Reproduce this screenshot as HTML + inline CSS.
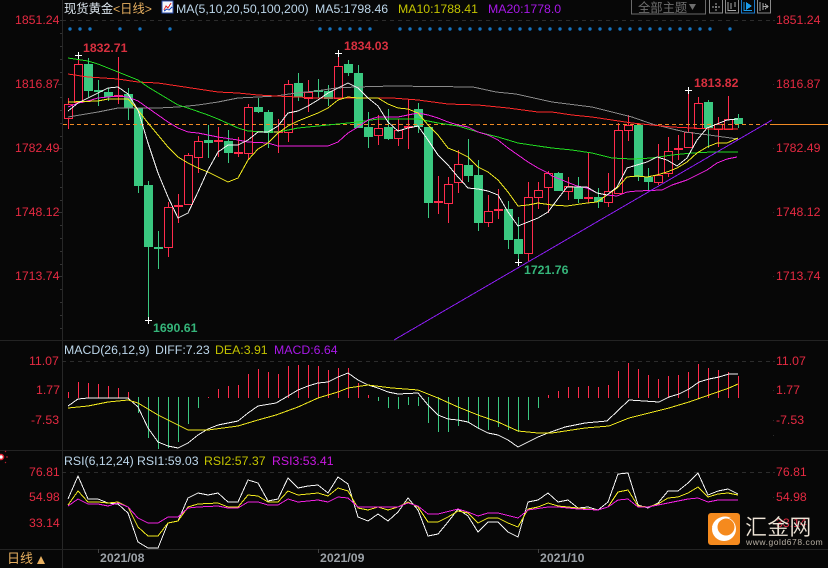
<!DOCTYPE html>
<html><head><meta charset="utf-8"><style>
html,body{margin:0;padding:0;background:#070707;width:828px;height:568px;overflow:hidden}
svg{display:block}
text{font-family:"Liberation Sans","Noto Sans CJK SC",sans-serif;font-size:12.3px;white-space:pre}
.r{fill:#e62a42}.b{font-weight:bold}
.l{fill:none;stroke-width:1;shape-rendering:crispEdges}
</style></head><body>
<svg width="828" height="568" viewBox="0 0 828 568" xmlns="http://www.w3.org/2000/svg">
<rect width="828" height="568" fill="#070707"/>
<!-- grid -->
<g shape-rendering="crispEdges" fill="none">
<path d="M62.5 0V568" stroke="#272727"/>
<path d="M0 340.5H828M0 450.5H828M0 549.5H828" stroke="#232323"/>
<path d="M62 20.5H775M62 361.5H775M62 472.5H775" stroke="#2c2c2c" stroke-dasharray="4 4"/>
<path d="M60 20.5h2M60 33.5h2M60 46.5h2M60 59.5h2M60 72.5h2M58 84.5h4M60 97.5h2M60 110.5h2M60 123.5h2M60 136.5h2M58 148.5h4M60 161.5h2M60 174.5h2M60 187.5h2M60 200.5h2M58 212.5h4M60 225.5h2M60 238.5h2M60 251.5h2M60 264.5h2M58 276.5h4M60 289.5h2M60 302.5h2M60 315.5h2M60 328.5h2" stroke="#333"/>
<path d="M773 20.5h1M773 84.5h1M773 148.5h1M773 212.5h1M773 276.5h1M773 361.5h1M773 390.5h1M773 420.5h1M773 435.5h1M773 472.5h1M773 497.5h1M773 523.5h1" stroke="#2c2c2c"/>
<path d="M98.5 549v4M318.5 549v4M538.5 549v4" stroke="#444"/>
</g>
<!-- blue dots -->
<g fill="#1673c0">
<circle cx="70" cy="29" r="1.7"/><circle cx="80" cy="29" r="1.7"/><circle cx="90" cy="29" r="1.7"/><circle cx="120" cy="29" r="1.7"/><circle cx="140" cy="29" r="1.7"/><circle cx="170" cy="29" r="1.7"/>
<circle cx="320" cy="29" r="1.7"/><circle cx="330" cy="29" r="1.7"/><circle cx="340" cy="29" r="1.7"/><circle cx="350" cy="29" r="1.7"/><circle cx="360" cy="29" r="1.7"/><circle cx="370" cy="29" r="1.7"/>
<circle cx="400" cy="29" r="1.7"/><circle cx="410" cy="29" r="1.7"/><circle cx="420" cy="29" r="1.7"/><circle cx="430" cy="29" r="1.7"/><circle cx="440" cy="29" r="1.7"/><circle cx="450" cy="29" r="1.7"/><circle cx="460" cy="29" r="1.7"/><circle cx="470" cy="29" r="1.7"/><circle cx="480" cy="29" r="1.7"/><circle cx="490" cy="29" r="1.7"/><circle cx="500" cy="29" r="1.7"/><circle cx="510" cy="29" r="1.7"/><circle cx="520" cy="29" r="1.7"/><circle cx="530" cy="29" r="1.7"/><circle cx="540" cy="29" r="1.7"/><circle cx="550" cy="29" r="1.7"/>
<circle cx="560" cy="29" r="1.7"/><circle cx="570" cy="29" r="1.7"/><circle cx="580" cy="29" r="1.7"/><circle cx="590" cy="29" r="1.7"/><circle cx="600" cy="29" r="1.7"/><circle cx="610" cy="29" r="1.7"/><circle cx="620" cy="29" r="1.7"/><circle cx="630" cy="29" r="1.7"/><circle cx="640" cy="29" r="1.7"/><circle cx="650" cy="29" r="1.7"/><circle cx="660" cy="29" r="1.7"/><circle cx="670" cy="29" r="1.7"/><circle cx="680" cy="29" r="1.7"/><circle cx="690" cy="29" r="1.7"/><circle cx="700" cy="29" r="1.7"/><circle cx="710" cy="29" r="1.7"/><circle cx="730" cy="29" r="1.7"/>
</g>
<!-- candles: green -->
<g shape-rendering="crispEdges">
<path fill="none" stroke="#3ac880" d="M88.5 58V97M98.5 80V106M108.5 88V101M128.5 88V120M138.5 108V193M148.5 181V320M158.5 231V269M208.5 125V158M228.5 130V163M258.5 98V113M268.5 110V148M298.5 73V101M318.5 79V98M328.5 85V106M348.5 60V76M358.5 65V128M368.5 112V148M388.5 109V140M418.5 103V133M428.5 127V218M468.5 139V182M478.5 160V231M508.5 201V249M518.5 217V262M558.5 172V191M578.5 177V203M598.5 188V208M638.5 123V181M648.5 168V190M708.5 100V148M738.5 114V128"/>
<path fill="#3ac880" d="M84 64h9v27h-9zM94 90h9v2h-9zM104 92h9v5h-9zM124 94h9v14h-9zM134 108h9v78h-9zM144 185h9v62h-9zM154 247h9v2h-9zM204 140h9v3h-9zM224 141h9v12h-9zM254 107h9v5h-9zM264 112h9v21h-9zM294 83h9v14h-9zM314 90h9v2h-9zM324 91h9v8h-9zM344 64h9v9h-9zM354 73h9v55h-9zM364 127h9v10h-9zM384 127h9v12h-9zM414 109h9v18h-9zM424 127h9v76h-9zM464 165h9v11h-9zM474 175h9v48h-9zM504 209h9v31h-9zM514 239h9v15h-9zM554 173h9v18h-9zM574 187h9v12h-9zM594 197h9v5h-9zM634 125h9v52h-9zM644 177h9v5h-9zM704 102h9v26h-9zM734 118h9v6h-9z"/>
<!-- candles: red -->
<path fill="none" stroke="#ff2b4c" d="M68.5 98V129M78.5 55V102M118.5 57V104M168.5 202V257M178.5 194V223M188.5 153V204M198.5 136V173M218.5 127V157M238.5 137V157M248.5 104V160M278.5 119V153M288.5 80V142M308.5 80V112M338.5 53V98M378.5 115V145M398.5 119V146M408.5 99V149M438.5 176V214M448.5 177V223M458.5 150V193M488.5 195V227M498.5 189V219M528.5 182V261M538.5 182V209M548.5 171V213M568.5 177V200M588.5 152V203M608.5 173V207M618.5 123V194M628.5 115V141M658.5 144V185M668.5 137V177M678.5 135V160M688.5 90V148M698.5 97V128M718.5 117V147M728.5 96V129"/>
<path fill="#ff2b4c" d="M114 95h9v2h-9zM174 205h9v2h-9zM214 140h9v2h-9zM234 152h9v2h-9zM274 131h9v2h-9zM404 126h9v2h-9zM434 201h9v2h-9zM494 209h9v2h-9zM584 197h9v2h-9zM674 148h9v2h-9z"/>
<path fill="#070707" stroke="#ff2b4c" d="M64.5 104.5h8v14h-8zM74.5 64.5h8v38h-8zM164.5 207.5h8v40h-8zM184.5 155.5h8v49h-8zM194.5 141.5h8v16h-8zM244.5 107.5h8v46h-8zM284.5 84.5h8v48h-8zM304.5 92.5h8v6h-8zM334.5 66.5h8v32h-8zM374.5 128.5h8v7h-8zM394.5 130.5h8v8h-8zM444.5 184.5h8v19h-8zM454.5 164.5h8v18h-8zM484.5 211.5h8v11h-8zM524.5 197.5h8v56h-8zM534.5 190.5h8v7h-8zM544.5 173.5h8v14h-8zM564.5 186.5h8v5h-8zM604.5 191.5h8v11h-8zM614.5 130.5h8v63h-8zM624.5 125.5h8v5h-8zM654.5 175.5h8v7h-8zM664.5 151.5h8v22h-8zM684.5 132.5h8v15h-8zM694.5 103.5h8v25h-8zM714.5 124.5h8v5h-8zM724.5 119.5h8v10h-8z"/>
</g>
<!-- orange price line -->
<path d="M63 124.5H771" stroke="#f08a24" stroke-dasharray="4 3" shape-rendering="crispEdges"/>
<path d="M771 124.5H828" stroke="#f08a24" shape-rendering="crispEdges"/>
<!-- moving averages -->
<polyline class="l" stroke="#8a8a8a" points="68,117 98,112 118,108 158,108 178,107 198,105 218,102 238,98 258,97 276,96 296,93 316,91 336,88 356,87 392,86 473,87 496,92 516,94 552,102 592,107 632,117 652,124 685,132 709,135 738,139"/>
<polyline class="l" stroke="#ff2a2a" points="68,74 88,77 118,79 138,82 158,83 178,86 198,89 218,92 238,93 258,95 276,96 318,98 358,98 392,98 418,100 448,104 478,105 508,108 538,112 552,112 572,115 592,117 612,120 632,123 652,125 672,127 692,128 712,129 738,129"/>
<polyline class="l" stroke="#22d922" points="68,58 88,61 98,64 118,72 138,80 148,87 158,93 168,99 178,105 188,108 208,115 218,119 238,128 248,131 268,132 278,132 298,128 318,126 338,124 358,122 378,119 398,119 418,119 438,123 458,126 478,132 498,137 518,143 538,146 552,148 572,150 592,153 612,158 632,159 652,158 672,155 692,153 712,152 738,152"/>
<polyline class="l" stroke="#f020e0" points="68,107 78,103 88,101 98,98 108,97 118,96 128,97 138,101 148,108 158,115 168,122 178,128 188,132 198,133 218,137 238,140 248,142 268,143 278,146 328,146 338,142 348,133 358,127 368,120 378,117 398,117 418,113 428,115 438,118 448,122 458,125 468,127 478,132 488,135 498,140 508,148 518,155 528,162 538,168 548,173 552,176 567,182 577,186 587,188 597,193 607,195 617,196 627,192 637,191 662,190 672,185 687,180 697,175 707,170 717,163 727,159 737,157"/>
<polyline class="l" stroke="#f0e81e" points="68,102 98,101 108,99 128,99 138,110 148,123 158,135 168,147 178,157 188,163 198,168 208,172 218,177 228,182 238,178 248,160 258,149 268,143 278,133 288,126 298,121 308,117 318,113 328,108 338,100 348,97 358,98 378,98 388,104 398,108 408,109 418,113 428,125 438,135 448,148 458,152 468,157 478,167 488,172 498,180 508,192 518,206 528,205 538,203 552,205 567,206 587,203 597,202 607,195 617,188 627,177 637,176 647,177 657,175 667,172 677,168 687,162 697,153 707,147 717,143 727,143 738,138"/>
<polyline class="l" stroke="#f4f4f4" points="68,111 78,103 88,98 98,93 108,88 118,87 128,94 138,110 148,143 158,173 168,197 178,218 188,213 198,192 208,170 218,152 228,145 238,145 248,140 258,132 268,132 278,126 288,113 298,111 308,106 318,100 328,93 338,88 348,83 358,88 368,98 378,106 388,122 398,131 408,128 418,126 428,140 438,155 448,165 458,177 468,188 478,189 488,191 498,195 508,212 518,226 528,222 538,218 548,212 557,200 567,187 587,187 597,193 607,195 617,187 627,168 637,165 647,162 657,157 667,160 677,166 687,158 697,140 707,128 717,124 727,120 738,119"/>
<path d="M394 340L772 120" stroke="#8a1cf0" fill="none" shape-rendering="crispEdges"/>
<!-- crosses -->
<path d="M75 55.5h7M78.5 52v7M335 53.5h7M338.5 50v7M685 90.5h7M688.5 87v7M145 320.5h7M148.5 317v7M515 262.5h7M518.5 259v7" stroke="#fff" shape-rendering="crispEdges"/>
<!-- high low labels -->
<text class="b" x="83" y="52" fill="#d8303f">1832.71</text>
<text class="b" x="344" y="50" fill="#d8303f">1834.03</text>
<text class="b" x="694" y="87" fill="#d8303f">1813.82</text>
<text class="b" x="153" y="332" fill="#35b57a">1690.61</text>
<text class="b" x="524" y="274" fill="#35b57a">1721.76</text>
<!-- axis labels -->
<g class="r">
<text x="15" y="24">1851.24</text><text x="15" y="88">1816.87</text><text x="15" y="152">1782.49</text><text x="15" y="216">1748.12</text><text x="15" y="280">1713.74</text>
<text x="776" y="24">1851.24</text><text x="776" y="88">1816.87</text><text x="776" y="152">1782.49</text><text x="776" y="216">1748.12</text><text x="776" y="280">1713.74</text>
<text x="29" y="365">11.07</text><text x="36" y="394">1.77</text><text x="31" y="424">-7.53</text>
<text x="776" y="365">11.07</text><text x="776" y="394">1.77</text><text x="776" y="424">-7.53</text>
<text x="29" y="476">76.81</text><text x="29" y="501">54.98</text><text x="29" y="527">33.14</text>
<text x="776" y="476">76.81</text><text x="776" y="501">54.98</text><text x="776" y="527">33.14</text>
</g>
<!-- header -->
<text x="64" y="13" fill="#d8e2ea">现货黄金</text>
<text x="113" y="13" fill="#e8b060">&lt;日线&gt;</text>
<g shape-rendering="crispEdges">
<rect x="162" y="1" width="11" height="12" fill="#f4f6fa" stroke="#2a4fb0"/>
<path d="M164 10L166 6L168 8L171 3" stroke="#e02020" fill="none"/>
<path d="M164 11L167 9L169 10L172 7" stroke="#2050c0" fill="none"/>
</g>
<text x="176" y="13" fill="#bcd6ea">MA(5,10,20,50,100,200)</text>
<text x="315" y="13" fill="#bcd6ea">MA5:1798.46</text>
<text x="398" y="13" fill="#c4c400">MA10:1788.41</text>
<text x="488" y="13" fill="#a818e8">MA20:1778.0</text>
<!-- theme & buttons -->
<g shape-rendering="crispEdges" fill="none">
<rect x="631.5" y="-1" width="74" height="15" stroke="#6a6a6a"/>
<rect x="709.5" y="-1" width="13" height="14" stroke="#8a8a8a"/>
<path d="M716 3V11M712 7H720" stroke="#aaa" stroke-dasharray="2 1"/>
<rect x="725.5" y="-1" width="13" height="14" stroke="#8a8a8a"/>
<path d="M728 2V10.5H736M731 3v6M735 2v5" stroke="#aaa"/>
<rect x="741.5" y="-1" width="13" height="14" stroke="#1a78c8"/>
<path d="M744 2V10.5H752" stroke="#1a9ae8"/>
<path d="M746 2L752 6L746 10Z" fill="#1a9ae8"/>
<rect x="757.5" y="-1" width="13" height="14" stroke="#8a8a8a"/>
<path d="M760 2v9M763 3v7" stroke="#aaa"/>
<path d="M763 6.5H768M765 4L768 6.5L765 9" stroke="#aaa"/>
</g>
<text x="638" y="12" fill="#6e6e6e">全部主题</text>
<path d="M689 4H696L692.5 10Z" fill="#6e6e6e"/>
<!-- MACD bars -->
<g shape-rendering="crispEdges" fill="none">
<path stroke="#ff2b4c" d="M68.5 398V392M78.5 398V382M88.5 398V383M98.5 398V384M108.5 398V386M118.5 398V388M128.5 398V392M208.5 398V397M218.5 398V389M228.5 398V386M238.5 398V385M248.5 398V374M258.5 398V369M268.5 398V372M278.5 398V374M288.5 398V366M298.5 398V365M308.5 398V365M318.5 398V366M328.5 398V370M338.5 398V368M348.5 398V368M358.5 398V383M368.5 398V395M548.5 398V395M558.5 398V391M568.5 398V387M578.5 398V387M588.5 398V386M598.5 398V387M608.5 398V385M618.5 398V371M628.5 398V363M638.5 398V369M648.5 398V375M658.5 398V379M668.5 398V376M678.5 398V375M688.5 398V372M698.5 398V364M708.5 398V368M718.5 398V370M728.5 398V372M738.5 398V376"/>
<path stroke="#3ac880" d="M138.5 397V413M148.5 397V438M158.5 397V449M168.5 397V448M178.5 397V442M188.5 397V424M198.5 397V408M378.5 397V401M388.5 397V408M398.5 397V409M408.5 397V405M418.5 397V406M428.5 397V423M438.5 397V432M448.5 397V432M458.5 397V426M468.5 397V423M478.5 397V429M488.5 397V430M498.5 397V427M508.5 397V430M518.5 397V432M528.5 397V420M538.5 397V408"/>
</g>
<polyline class="l" stroke="#f4f4f4" points="68,406 78,399 88,398 128,398 138,407 148,428 158,442 168,446 178,448 188,443 198,435 208,429 218,425 238,421 248,413 258,406 276,403 288,396 298,390 308,386 318,383 328,382 338,377 348,373 358,380 368,385 378,388 388,392 398,394 418,393 428,405 438,415 448,419 458,420 468,422 478,428 488,433 498,435 508,440 518,447 528,442 538,437 548,433 565,427 585,423 607,421 629,400 659,402 669,397 679,394 689,389 699,382 709,379 719,377 729,374 738,374"/>
<polyline class="l" stroke="#f0e81e" points="68,408 88,406 108,402 128,400 138,403 158,415 178,425 188,430 208,430 238,426 258,420 276,415 298,407 318,398 338,392 348,388 368,385 392,388 418,390 438,398 458,407 478,415 498,422 518,431 538,433 552,433 585,428 609,426 629,418 649,413 669,408 689,402 709,395 729,388 738,384"/>
<text x="64" y="354" fill="#bcd6ea">MACD(26,12,9)</text>
<text x="155" y="354" fill="#bcd6ea">DIFF:7.23</text>
<text x="215" y="354" fill="#c4c400">DEA:3.91</text>
<text x="274" y="354" fill="#a818e8">MACD:6.64</text>
<!-- RSI -->
<polyline class="l" stroke="#f4f4f4" points="68,499 78,476 88,499 98,499 108,503 118,504 128,513 138,542 148,548 158,548 168,523 178,521 188,498 198,493 208,495 218,493 228,502 238,502 248,480 258,483 268,501 278,499 288,478 298,488 308,486 318,485 328,493 338,477 348,484 358,517 368,521 378,514 388,521 398,512 408,498 418,510 428,536 438,534 448,522 458,509 468,516 478,532 488,522 498,522 508,532 518,537 528,502 538,500 548,493 558,502 568,500 578,508 588,507 598,510 608,502 618,474 628,473 638,505 648,508 658,503 668,491 678,491 688,483 698,473 708,495 718,491 728,489 738,494"/>
<polyline class="l" stroke="#f0e81e" points="68,505 78,491 88,502 98,502 108,503 118,502 128,507 138,527 148,536 158,536 168,523 178,521 188,507 198,504 218,503 228,507 238,507 248,495 258,496 268,502 278,502 288,491 298,495 318,493 328,496 338,488 348,491 358,508 368,510 378,507 388,510 398,507 408,502 418,507 428,522 438,522 448,517 458,511 468,513 478,523 488,518 498,518 508,523 518,527 528,509 538,507 548,503 558,506 568,507 578,508 588,509 598,510 608,507 618,492 628,490 638,506 648,507 658,504 668,498 678,497 688,493 698,487 708,497 718,494 728,493 738,495"/>
<polyline class="l" stroke="#f020e0" points="68,506 78,499 88,504 98,504 108,506 118,503 128,507 138,518 148,523 158,523 168,517 178,517 188,508 198,507 218,506 228,508 238,508 248,502 258,502 268,505 278,505 288,499 298,502 318,500 328,502 338,497 348,498 358,507 368,507 378,507 398,507 408,503 418,506 428,514 438,514 458,509 468,512 478,516 488,513 498,513 518,518 528,510 548,507 558,507 578,509 598,510 608,507 618,500 628,499 638,507 648,507 668,503 688,499 698,498 708,502 718,500 738,500"/>
<text x="64" y="465" fill="#bcd6ea">RSI(6,12,24)</text>
<text x="137" y="465" fill="#bcd6ea">RSI1:59.03</text>
<text x="204" y="465" fill="#c4c400">RSI2:57.37</text>
<text x="272" y="465" fill="#c818e0">RSI3:53.41</text>
<!-- small marker at left -->
<circle cx="1" cy="457" r="2.5" fill="#fff" stroke="#e02030" stroke-width="1.5"/>
<path d="M5 452l1-1M6 457h2M5 462l1 1" stroke="#c02030"/>
<!-- bottom -->
<text x="7" y="563" fill="#e8b060" style="font-size:13px">日线</text>
<path d="M37 564L41 556L45 564Z" fill="#e8b060"/>
<text class="b" x="100" y="562" fill="#9aa0a6">2021/08</text>
<text class="b" x="320" y="562" fill="#9aa0a6">2021/09</text>
<text class="b" x="540" y="562" fill="#9aa0a6">2021/10</text>
<!-- logo -->
<rect x="708" y="513" width="32" height="32" rx="3" fill="#f58a1e"/>
<circle cx="724" cy="529" r="12" fill="#fff"/>
<circle cx="726" cy="527" r="8.5" fill="#f58a1e"/>
<path d="M712 527C714 518 724 514 731 518C725 517 718 520 715 528Z" fill="#fff"/>
<text x="745" y="535" fill="#f0e6d8" style="font-size:22px;letter-spacing:0.2px;stroke:#111;stroke-width:0.2px">汇金网</text>
<text x="746" y="545" fill="#b8b0a4" style="font-size:8.5px;letter-spacing:0.55px">www.gold678.com</text>
</svg>
</body></html>
